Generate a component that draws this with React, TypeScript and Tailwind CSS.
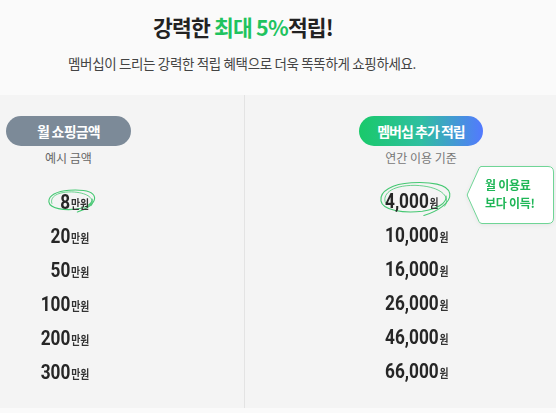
import React from "react";

const left = ["8", "20", "50", "100", "200", "300"];
const right = ["4,000", "10,000", "16,000", "26,000", "46,000", "66,000"];

const Loop = ({ className, w, h }: { className: string; w: number; h: number }) => (
  <svg
    width={w}
    height={h}
    viewBox={`0 0 ${w} ${h}`}
    className={className}
    fill="none"
    stroke="#45c872"
    strokeWidth="1.1"
    strokeLinecap="round"
  >
    <path
      d={`M${w * 0.62} ${h * 0.96} C${w * 0.78} ${h * 0.86} ${w * 0.99} ${h * 0.62} ${w * 0.97} ${h * 0.35} C${w * 0.95} ${h * 0.08} ${w * 0.7} ${h * 0.02} ${w * 0.45} ${h * 0.05} C${w * 0.2} ${h * 0.08} ${w * 0.02} ${h * 0.28} ${w * 0.04} ${h * 0.55} C${w * 0.06} ${h * 0.82} ${w * 0.35} ${h * 0.9} ${w * 0.6} ${h * 0.84} C${w * 0.8} ${h * 0.78} ${w * 0.93} ${h * 0.62} ${w * 0.92} ${h * 0.42}`}
    />
    <path
      d={`M${w * 0.9} ${h * 0.7} C${w * 0.98} ${h * 0.5} ${w * 0.9} ${h * 0.15} ${w * 0.5} ${h * 0.12} C${w * 0.15} ${h * 0.12} ${w * 0.06} ${h * 0.4} ${w * 0.1} ${h * 0.6}`}
      strokeWidth="0.8"
    />
  </svg>
);

const Bubble = () => (
  <div className="absolute left-[221px] top-[70px] w-[89px] h-[60px] drop-shadow-[0_1px_2px_rgba(0,0,0,0.06)]">
    <svg width="89" height="60" viewBox="0 0 89 60" className="absolute inset-0" fill="none">
      <path
        d="M15 1.5 H82 Q87.5 1.5 87.5 7 V53 Q87.5 58.5 82 58.5 H16 Q14 58.5 13 56.5 L1.5 31 Q1 30 1.5 29 L13 3.5 Q14 1.5 15 1.5 Z"
        fill="#ffffff"
        stroke="#6fd596"
        strokeWidth="1"
      />
    </svg>
    <p className="relative pl-[19px] pt-[11px] text-[12px] leading-[18px] font-bold text-[#1fb657] tracking-[-0.3px]">
      월 이용료
      <br />
      보다 이득!
    </p>
  </div>
);

const Amount = ({ num, unit, origin }: { num: string; unit: string; origin: string }) => (
  <span
    className={`inline-flex items-baseline scale-x-[0.82] ${origin} font-['Roboto','Noto_Sans_CJK_KR',sans-serif] text-[#262626]`}
  >
    <span className="text-[21px] font-bold leading-[34px]">{num}</span>
    <span className="text-[12px] font-bold text-[#333] font-['Noto_Sans_CJK_KR',sans-serif] ml-[1px]">{unit}</span>
  </span>
);

export default function App() {
  return (
    <div className="w-[556px] h-[413px] bg-[#fafafa] font-['Noto_Sans_CJK_KR','Noto_Sans',sans-serif] overflow-hidden">
      <div className="h-[95px]">
        <h1 className="pl-[153px] pt-[11px] text-[21.5px] leading-[32px] font-bold tracking-[-0.8px] text-[#222]">
          강력한 <span className="text-[#1fc35f]">최대 5%</span>적립!
        </h1>
        <p className="mt-[9px] pl-[68px] text-[13.5px] leading-[22px] text-[#444] tracking-[-0.35px]">
          멤버십이 드리는 강력한 적립 혜택으로 더욱 똑똑하게 쇼핑하세요.
        </p>
      </div>

      <div className="h-[313px] bg-[#f4f4f4] grid grid-cols-[244px_1px_1fr]">
        <div className="pt-[21px] pl-[6px]">
          <div className="w-[125px] flex flex-col items-center">
            <div className="w-[125px] h-[30px] rounded-full bg-[#7c8a98] flex items-center justify-center text-white text-[14px] font-bold tracking-[-0.8px]">
              월 쇼핑금액
            </div>
            <p className="mt-[4px] text-[12px] leading-[16px] text-[#666]">예시 금액</p>
          </div>
          <div className="mt-[19px] w-[83px] flex flex-col items-end">
            {left.map((n, i) => (
              <div key={n} className="relative h-[34px]">
                {i === 0 && <Loop className="absolute right-[-7px] top-[4px]" w={49} h={24} />}
                <Amount num={n} unit="만원" origin="origin-right" />
              </div>
            ))}
          </div>
        </div>

        <div className="bg-[#e3e3e3]" />

        <div className="relative pt-[21px]">
          <div className="ml-[114px] w-[124px] flex flex-col items-center">
            <div className="w-[124px] h-[30px] rounded-full bg-[linear-gradient(90deg,#19c96a_0%,#2fbfa0_50%,#5379ff_100%)] flex items-center justify-center text-white text-[14px] font-bold tracking-[-1px]">
              멤버십 추가 적립
            </div>
            <p className="mt-[4px] text-[12px] leading-[16px] text-[#777]">연간 이용 기준</p>
          </div>
          <div className="mt-[18px] ml-[140px] flex flex-col items-start">
            {right.map((n, i) => (
              <div key={n} className="relative h-[34px]">
                {i === 0 && <Loop className="absolute left-[-7px] top-[-3px]" w={74} h={36} />}
                <Amount num={n} unit="원" origin="origin-left" />
              </div>
            ))}
          </div>
          <Bubble />
        </div>
      </div>
    </div>
  );
}
